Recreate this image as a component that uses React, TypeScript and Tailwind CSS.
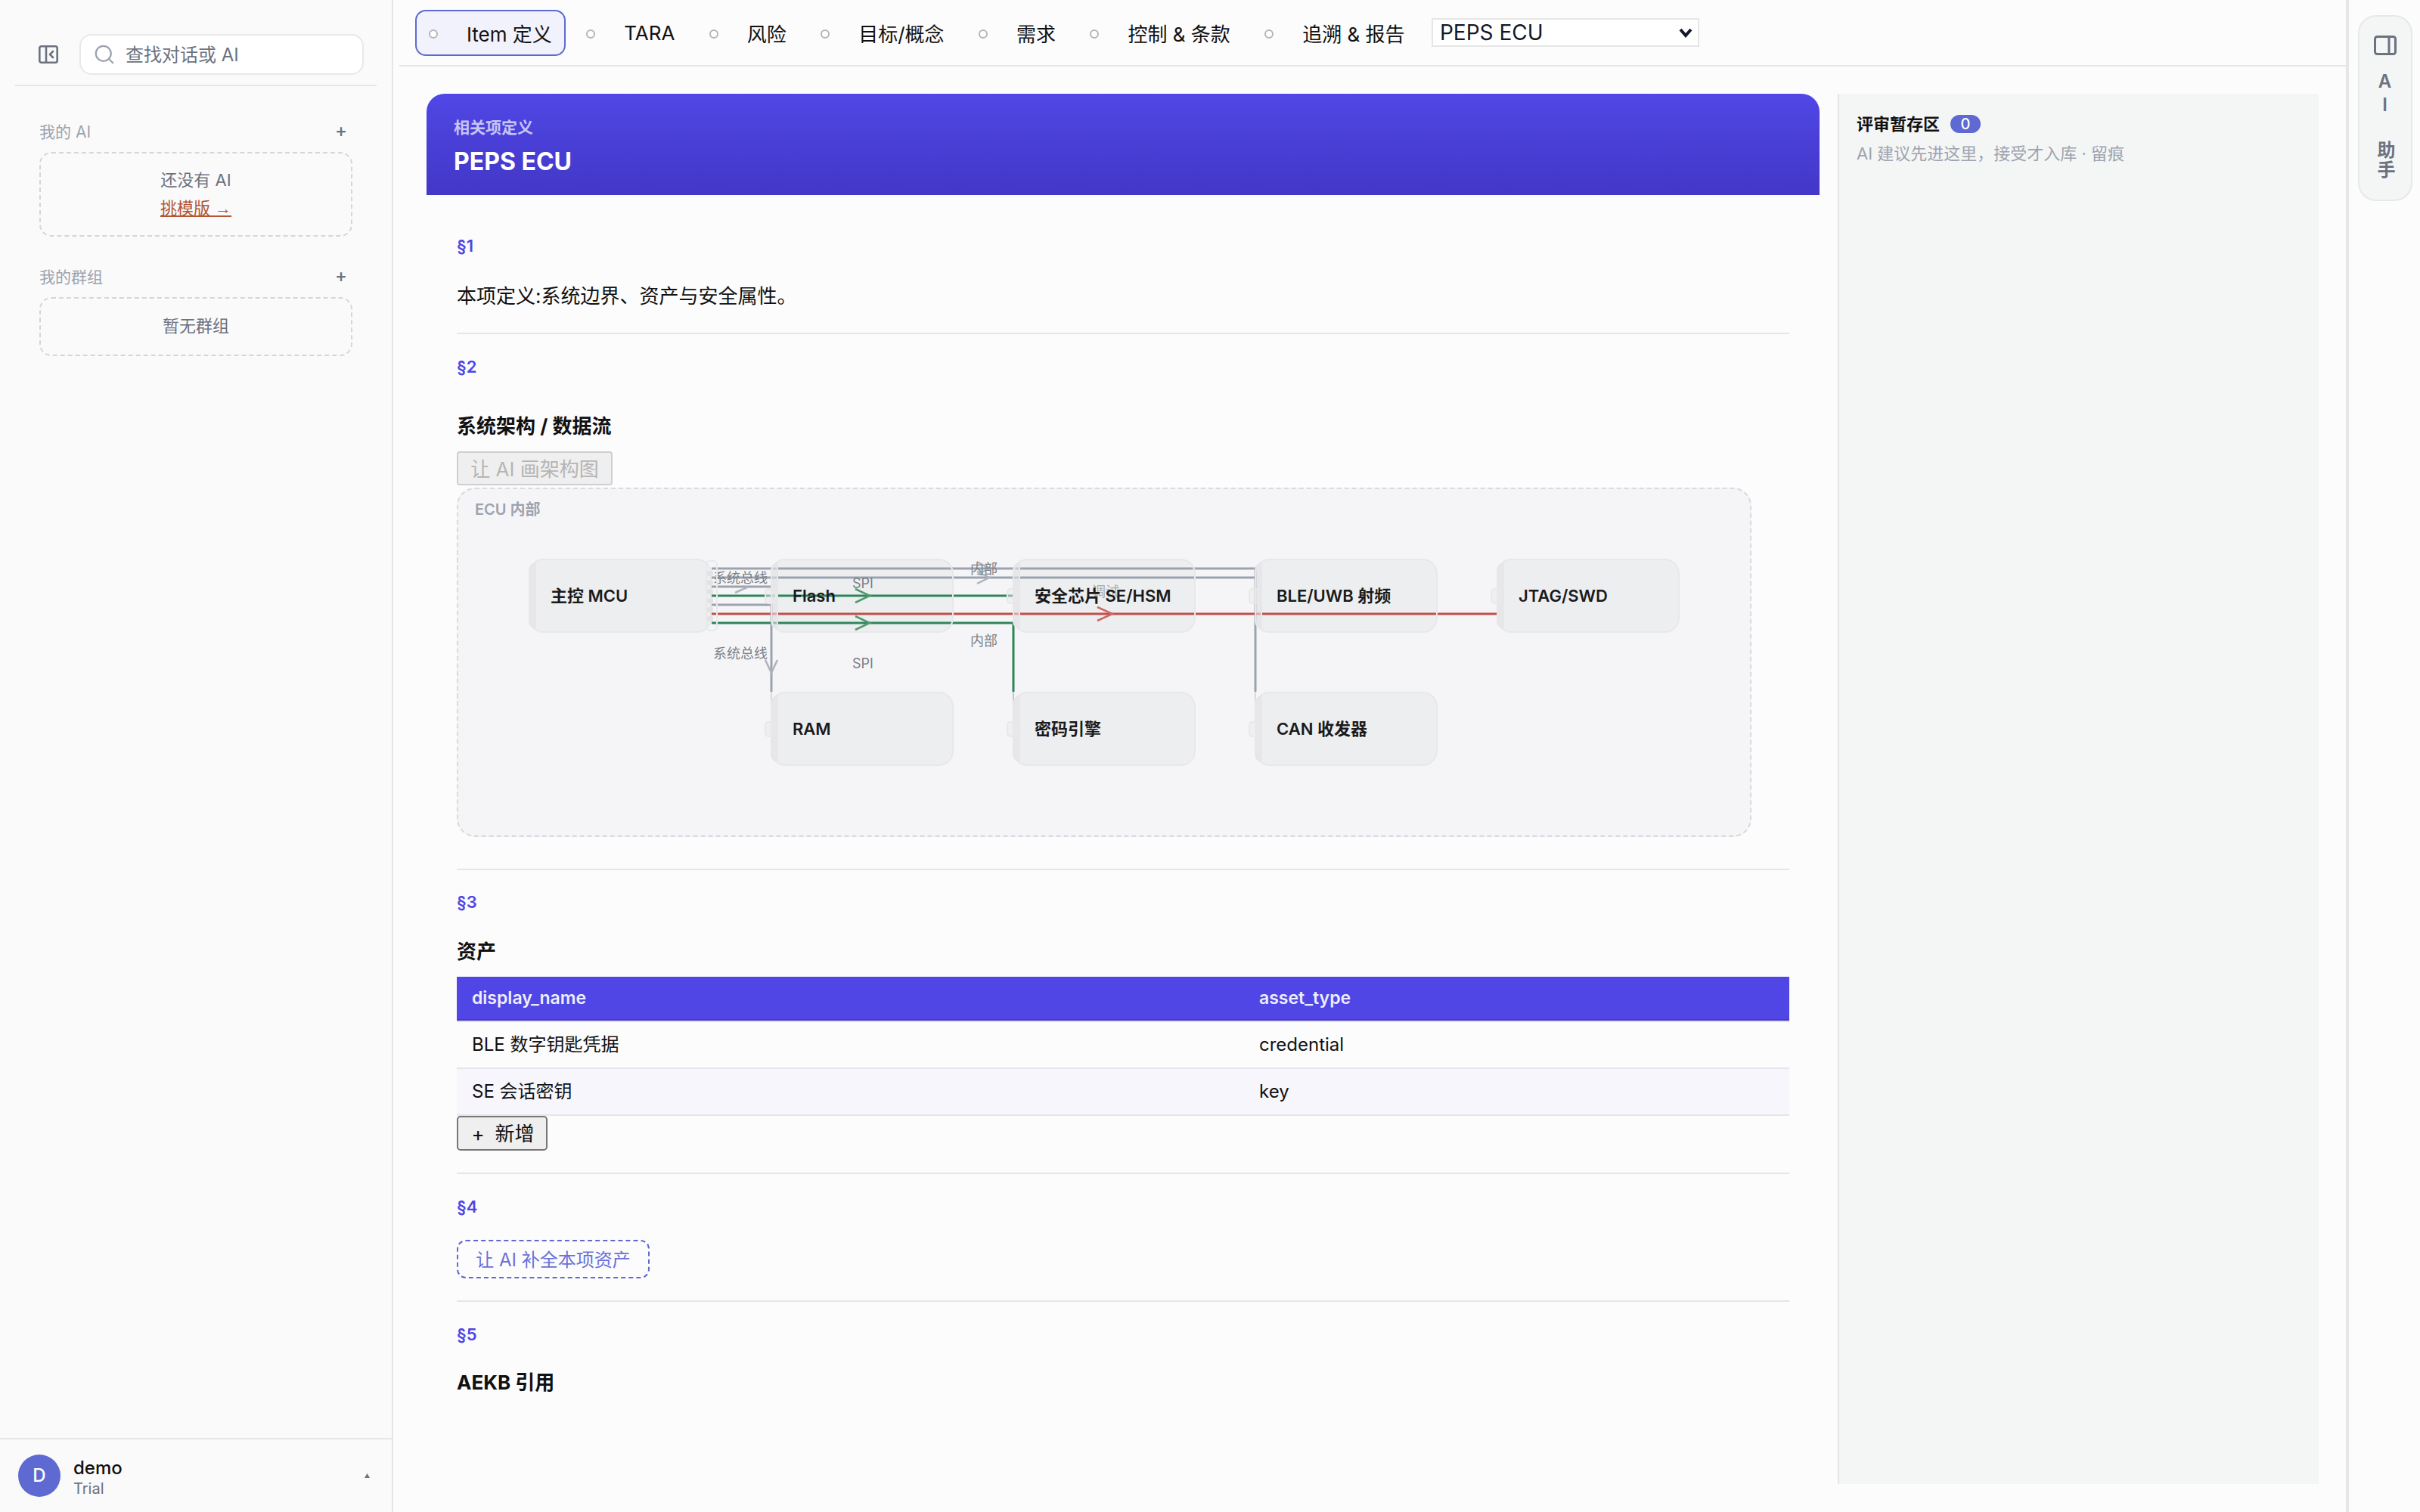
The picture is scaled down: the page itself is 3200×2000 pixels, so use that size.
import { Search } from 'lucide-react'

const tabs = ['Item 定义', 'TARA', '风险', '目标/概念', '需求', '控制 & 条款', '追溯 & 报告']

const nodes = [
  { name: '主控 MCU', pos: 'left-[93px] top-[92px]', handle: false },
  { name: 'Flash', pos: 'left-[413px] top-[92px]', handle: true },
  { name: '安全芯片 SE/HSM', pos: 'left-[733px] top-[92px]', handle: true },
  { name: 'BLE/UWB 射频', pos: 'left-[1053px] top-[92px]', handle: true },
  { name: 'JTAG/SWD', pos: 'left-[1373px] top-[92px]', handle: true },
  { name: 'RAM', pos: 'left-[413px] top-[268px]', handle: true },
  { name: '密码引擎', pos: 'left-[733px] top-[268px]', handle: true },
  { name: 'CAN 收发器', pos: 'left-[1053px] top-[268px]', handle: true },
]

const edgeLabels = [
  { text: '系统总线', pos: 'left-[337px] top-[106px]' },
  { text: 'SPI', pos: 'left-[521px] top-[113px]' },
  { text: '内部', pos: 'left-[677px] top-[94px]' },
  { text: '系统总线', pos: 'left-[337px] top-[206px]' },
  { text: 'SPI', pos: 'left-[521px] top-[219px]' },
  { text: '内部', pos: 'left-[677px] top-[189px]' },
  { text: '调试', pos: 'left-[838px] top-[124px] opacity-60' },
]

const assets = [
  { name: 'BLE 数字钥匙凭据', type: 'credential', alt: false },
  { name: 'SE 会话密钥', type: 'key', alt: true },
]

function SectionNo({ children }: { children: string }) {
  return <div className="h-[30px] text-[22px] leading-[30px] font-semibold text-[#4f46e5]">{children}</div>
}

function Rule() {
  return <hr className="border-0 h-[2px] bg-[#e6e6e6]" />
}

function SideGroup({ title, className, children }: { title: string; className: string; children: React.ReactNode }) {
  return (
    <div>
      <div className="flex h-[30px] items-center justify-between pr-[7px]">
        <span className="text-[21px] leading-[30px] text-[#9ca3af]">{title}</span>
        <span className="text-[24px] leading-[26px] font-medium text-[#6b7280] -translate-y-[2px]">+</span>
      </div>
      <div className={`mt-[11px] flex flex-col items-center justify-center rounded-[16px] border-2 border-dashed border-[#d6d6d6] ${className}`}>
        {children}
      </div>
    </div>
  )
}

function Diagram() {
  return (
    <div className="relative mt-[3px] h-[462px] w-[1712px] rounded-[24px] border-2 border-dashed border-[#d9d9de] bg-[#f5f5f7]">
      <div className="absolute left-[22px] top-[15px] text-[20px] leading-[24px] font-semibold text-[#9ca3af]">ECU 内部</div>

      {nodes.map((n) => (
        <div key={n.name} className={`absolute h-[98px] w-[242px] rounded-[20px] bg-[#edeef0] ${n.pos}`} />
      ))}

      <svg className="absolute -left-[2px] -top-[2px] h-[462px] w-[1712px]" viewBox="604 645 1712 462" fill="none">
        <g stroke="#9ca3af" strokeWidth="3">
          <path d="M941 752H1660V915" />
          <path d="M941 764H1660" />
          <path d="M941 776H1020" />
          <path d="M941 800H1020V915" />
        </g>
        <path d="M941 788H1339" stroke="#2f855a" strokeWidth="3" />
        <path d="M941 824H1340V915" stroke="#2f855a" strokeWidth="3" />
        <path d="M941 812H1980" stroke="#c0504a" strokeWidth="3" />
        <g strokeWidth="1.5" opacity="0.45">
          <path d="M1020 915V964M1660 915V964" stroke="#9ca3af" />
          <path d="M1340 915V964" stroke="#2f855a" />
          <path d="M1980 812V788" stroke="#c0504a" />
        </g>
        <g stroke="#aeb3bb" strokeWidth="2.5">
          <path d="M972 784L990 776" />
          <path d="M1292 743L1308 752L1292 760" />
          <path d="M1292 756L1308 764L1292 772" />
          <path d="M1012 873L1020 890L1028 873" />
        </g>
        <g stroke="#4f9a6e" strokeWidth="2.5">
          <path d="M1131 779L1150 788L1131 797" />
          <path d="M1131 815L1150 824L1131 833" />
        </g>
        <path d="M1451 803L1471 812L1451 821" stroke="#cc6a60" strokeWidth="2.5" />
      </svg>

      {edgeLabels.map((l) => (
        <span key={l.pos} className={`absolute text-[18px] leading-[24px] text-[#7b8088] ${l.pos}`}>{l.text}</span>
      ))}

      {nodes.map((n) => (
        <div key={n.name} className={`absolute flex h-[98px] w-[242px] items-center rounded-[20px] border-2 border-[#e8e8ea] pl-[27px] ${n.pos}`}>
          <span className="absolute -left-[2px] bottom-[3px] top-[3px] w-[10px] rounded-l-[12px] border-x-2 border-[#e7e7e9] bg-[#e2e2e5]/60" />
          {n.handle && (
            <span className="absolute -left-[10px] top-[37px] h-[21px] w-[16px] rounded-[5px] border-2 border-[#e8e8ea] bg-[#e9e9eb]/50" />
          )}
          <span className="relative text-[22px] leading-[30px] font-semibold text-[#1a1a1a]">{n.name}</span>
        </div>
      ))}

      {/* mcu source handles */}
      <div className="absolute left-[327px] top-[94px] flex h-[94px] w-[16px] flex-col gap-[5px] rounded-[6px] border-2 border-[#e9e9eb] pt-[12px]">
        <span className="h-[7px] w-[8px] rounded-[2px] bg-[#e2e3e5]" />
        <span className="h-[7px] w-[8px] rounded-[2px] bg-[#e2e3e5]" />
        <span className="h-[7px] w-[8px] rounded-[2px] bg-[#e2e3e5]" />
        <span className="h-[7px] w-[8px] rounded-[2px] bg-[#e2e3e5]" />
        <span className="h-[7px] w-[8px] rounded-[2px] bg-[#e2e3e5]" />
        <span className="h-[7px] w-[8px] rounded-[2px] bg-[#e2e3e5]" />
      </div>
    </div>
  )
}

export default function App() {
  return (
    <div className="flex h-[2000px] w-[3200px] overflow-hidden bg-[#fcfcfc] font-[Inter,'Noto_Sans_CJK_SC',sans-serif] text-[#111111]">
      <aside className="flex w-[520px] shrink-0 flex-col border-r-2 border-[#e6e6e6] bg-[#fafafa]">
        <div className="mx-[20px] flex h-[114px] items-center border-b-2 border-[#e6e6e6] pl-[31px] pt-[32px]">
          <svg width="26" height="24" viewBox="0 0 26 24" fill="none" stroke="#6b7280" strokeWidth="2.6" strokeLinejoin="round" strokeLinecap="round">
            <rect x="1.3" y="1.3" width="23.4" height="21.4" rx="2.5" />
            <path d="M10 1.3V22.7" />
            <path d="M19 8L15 12L19 16" />
          </svg>
          <div className="ml-[28px] flex h-[54px] w-[376px] items-center rounded-[16px] border-2 border-[#e8e8e8] bg-white pl-[16px]">
            <Search size={30} strokeWidth={1.8} className="text-[#9ca3af]" />
            <span className="ml-[13px] pt-[2px] text-[24px] leading-[32px] text-[#6b7280]">查找对话或 AI</span>
          </div>
        </div>

        <div className="mt-[46px] flex flex-col gap-[39px] pl-[52px] pr-[52px]">
          <SideGroup title="我的 AI" className="h-[112px] gap-[5px]">
            <span className="text-[22px] leading-[32px] text-[#6b7280]">还没有 AI</span>
            <span className="text-[22px] leading-[32px] text-[#b45533] underline">
              挑模版 <span className="font-['Liberation_Sans',sans-serif]">→</span>
            </span>
          </SideGroup>
          <SideGroup title="我的群组" className="h-[78px]">
            <span className="-translate-y-[1px] text-[22px] leading-[32px] text-[#6b7280]">暂无群组</span>
          </SideGroup>
        </div>

        <div className="mt-auto flex h-[98px] items-center border-t-2 border-[#e6e6e6] pl-[24px] pr-[29px]">
          <div className="flex h-[56px] w-[56px] shrink-0 items-center justify-center rounded-full bg-[#5e6ad2] text-[24px] font-medium text-white">D</div>
          <div className="ml-[17px] pt-[6px]">
            <div className="text-[24px] leading-[28px] font-medium text-[#111111]">demo</div>
            <div className="text-[20px] leading-[26px] text-[#6b7280]">Trial</div>
          </div>
          <svg className="ml-auto" width="7" height="6" viewBox="0 0 7 6" fill="#6b7280">
            <path d="M3.5 0L7 6H0Z" />
          </svg>
        </div>
      </aside>

      <main className="ml-[8px] flex w-[2574px] shrink-0 flex-col">
        <header className="flex h-[88px] shrink-0 items-center gap-[9.4px] border-b-2 border-[#e6e6e6] pl-[21px]">
          {tabs.map((t, i) => (
            <label
              key={t}
              className={
                i === 0
                  ? 'flex h-[61px] items-center rounded-[14px] border-2 border-[#5e6ad2] bg-[#f1f2fb] px-[16px] pt-[4px] text-[26px]'
                  : 'flex h-[61px] items-center rounded-[14px] border-2 border-transparent px-[16px] pt-[4px] text-[26px]'
              }
            >
              <span className="mr-[38px] h-[12px] w-[12px] rounded-full border-2 border-[#b5b5b5] bg-white" />
              <span className={t === 'TARA' ? '-translate-y-[2px]' : ''}>{t}</span>
            </label>
          ))}
          <div className="relative ml-[8px]">
            <select className="block h-[38px] w-[354px] appearance-none border-2 border-[#e6e6e6] bg-white pl-[9px] text-[28px] leading-[32px] text-[#111827]">
              <option>PEPS ECU</option>
            </select>
            <svg className="absolute right-[9px] top-[12px]" width="18" height="14" viewBox="0 0 18 14" fill="none" stroke="#111827" strokeWidth="4">
              <path d="M2 3L9 11L16 3" />
            </svg>
          </div>
        </header>

        <div className="flex min-h-0 flex-1 gap-[24px] pb-[37px] pl-[36px] pr-[36px] pt-[36px]">
          <div className="w-[1842px] shrink-0">
            <div className="flex h-[134px] flex-col rounded-t-[24px] bg-gradient-to-b from-[#5047e6] to-[#4237c6] pl-[36px] pt-[30px]">
              <div className="text-[21px] leading-[30px] font-bold text-[#c7c4f6]">相关项定义</div>
              <div className="mt-[10px] text-[32px] leading-[40px] font-bold text-white">PEPS ECU</div>
            </div>

            <div className="px-[40px] pt-[52px]">
              <SectionNo>§1</SectionNo>
              <p className="mt-[32px] text-[26px] leading-[40px]">本项定义:系统边界、资产与安全属性。</p>
              <div className="mt-[28px]"><Rule /></div>

              <div className="mt-[28px]"><SectionNo>§2</SectionNo></div>
              <h3 className="mt-[44px] text-[26px] leading-[40px] font-bold">系统架构 / 数据流</h3>
              <button disabled className="mt-[13px] block h-[45px] w-[206px] rounded-[4px] border-2 border-[#cfcfcf] bg-[#efefef] pt-[2px] text-[26px] leading-[32px] text-[#b5b5b5]">
                让 AI 画架构图
              </button>
              <Diagram />
              <div className="mt-[42px]"><Rule /></div>

              <div className="mt-[27px]"><SectionNo>§3</SectionNo></div>
              <h3 className="mt-[31px] text-[26px] leading-[40px] font-bold">资产</h3>
              <table className="mt-[13px] w-[1762px] table-fixed border-separate border-spacing-0">
                <thead>
                  <tr className="bg-[#4f46e5]">
                    <th className="h-[58px] w-[1041px] border-b-2 border-[#4338ca] pl-[20px] text-left text-[23px] font-semibold text-[#eeedfd]">display_name</th>
                    <th className="h-[58px] border-b-2 border-[#4338ca] pl-[20px] text-left text-[23px] font-semibold text-[#eeedfd]">asset_type</th>
                  </tr>
                </thead>
                <tbody>
                  {assets.map((a) => (
                    <tr key={a.name} className={a.alt ? 'bg-[#f6f6fc]' : ''}>
                      <td className={a.alt ? 'h-[62px] border-b-2 border-[#e5e5ea] pl-[20px] text-[24px]' : 'h-[64px] border-y-2 border-t-[#dcdce2] border-b-[#e5e5ea] pl-[20px] text-[24px]'}>{a.name}</td>
                      <td className={a.alt ? 'h-[62px] border-b-2 border-[#e5e5ea] pl-[20px] text-[24px]' : 'h-[64px] border-y-2 border-t-[#dcdce2] border-b-[#e5e5ea] pl-[20px] text-[24px]'}>{a.type}</td>
                    </tr>
                  ))}
                </tbody>
              </table>
              <button className="block h-[46px] w-[120px] rounded-[5px] border-2 border-[#767676] bg-[#efefef] pl-[2px] pt-[2px] text-[26px] leading-[32px] text-[#111111]">
                <span className="mr-[14px]">+</span>新增
              </button>
              <div className="mt-[29px]"><Rule /></div>

              <div className="mt-[28px]"><SectionNo>§4</SectionNo></div>
              <button className="mt-[29px] block h-[51px] w-[255px] rounded-[12px] border-2 border-dashed border-[#5e6ad2] pt-[2px] text-[24px] leading-[32px] text-[#6a70d8]">
                让 AI 补全本项资产
              </button>
              <div className="mt-[29px]"><Rule /></div>

              <div className="mt-[28px]"><SectionNo>§5</SectionNo></div>
              <h3 className="mt-[29px] text-[26px] leading-[40px] font-bold">AEKB 引用</h3>
            </div>
          </div>

          <section className="w-[636px] shrink-0 border-l-2 border-[#e6e6e6] bg-[#f4f5f5] pl-[23px] pt-[24px]">
            <div className="flex items-center gap-[14px]">
              <span className="text-[22px] leading-[32px] font-bold">评审暂存区</span>
              <span className="flex h-[24px] w-[40px] items-center justify-center rounded-full bg-[#5e6ad2] text-[20px] font-medium text-white">0</span>
            </div>
            <p className="mt-[7px] text-[22px] leading-[32px] text-[#9ca3af]">AI 建议先进这里，接受才入库 · 留痕</p>
          </section>
        </div>
      </main>

      <div className="flex-1 border-l-4 border-[#e6e6e6] pl-[12px] pt-[20px]">
        <div className="flex h-[246px] w-[72px] flex-col items-center rounded-[24px] border-2 border-[#e7e8e8] bg-[#f4f5f5] pt-[25px]">
          <svg width="30" height="26" viewBox="0 0 30 26" fill="none" stroke="#6b7280" strokeWidth="3" strokeLinejoin="round">
            <rect x="1.5" y="1.5" width="27" height="23" rx="3" />
            <path d="M20 1.5V24.5" />
          </svg>
          <span className="mt-[20px] -translate-x-[1px] text-[24px] leading-[28px] font-semibold tracking-[2px] text-[#6b7280] [text-orientation:upright] [writing-mode:vertical-rl]">
            AI 助手
          </span>
        </div>
      </div>
    </div>
  )
}
